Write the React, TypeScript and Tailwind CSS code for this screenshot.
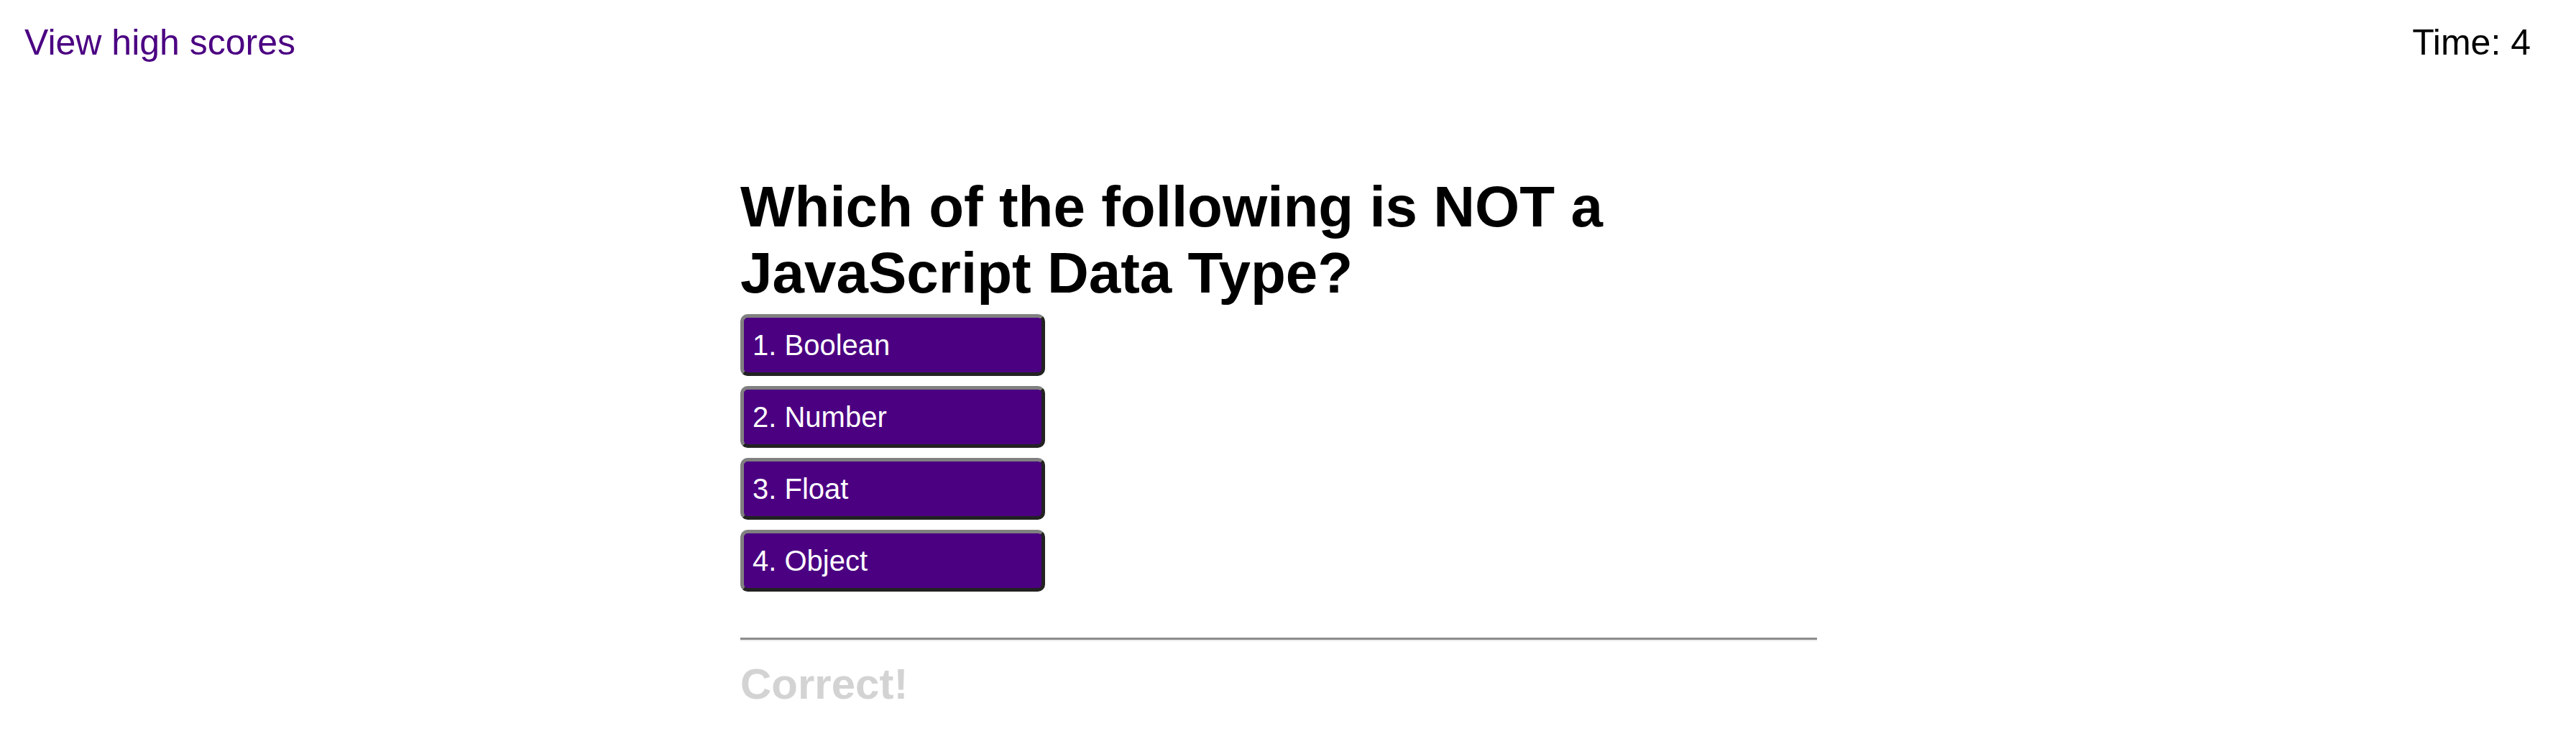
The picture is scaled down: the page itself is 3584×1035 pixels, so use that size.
import React from "react";

const answers = ["1. Boolean", "2. Number", "3. Float", "4. Object"];

export default function App() {
  return (
    <div
      className="min-h-[1035px] w-full bg-white text-black"
      style={{ fontFamily: '"Liberation Sans", Arial, sans-serif' }}
    >
      <header className="flex items-start justify-between pl-[34px] pr-[63px] pt-[31px]">
        <a href="#" className="text-[50px] leading-[57px] text-[#4b0082] no-underline">
          View high scores
        </a>
        <div className="text-[50px] leading-[57px] text-black">Time: 4</div>
      </header>

      <main className="ml-[1030px] mt-[154px] w-[1498px]">
        <h1 className="m-0 text-[80px] font-bold leading-[92px] text-black">
          Which of the following is NOT a JavaScript Data Type?
        </h1>

        <div className="mt-[11px] flex flex-col gap-[14px]">
          {answers.map((a) => (
            <button
              key={a}
              className="box-border flex h-[86px] w-[424px] items-center rounded-[10px] border-[5px] border-t-[#808080] border-l-[#808080] border-b-[#222222] border-r-[#222222] bg-[#4b0082] pl-[12px] text-left text-[40px] leading-[46px] text-white"
            >
              {a}
            </button>
          ))}
        </div>

        <hr className="mt-[64px] h-0 border-0 border-t-[3px] border-b-[2px] border-t-[#8c8c8c] border-b-[#ececec]" />

        <p className="m-0 mt-[25px] text-[60px] font-bold leading-[69px] text-[#d3d3d3]">
          Correct!
        </p>
      </main>
    </div>
  );
}
